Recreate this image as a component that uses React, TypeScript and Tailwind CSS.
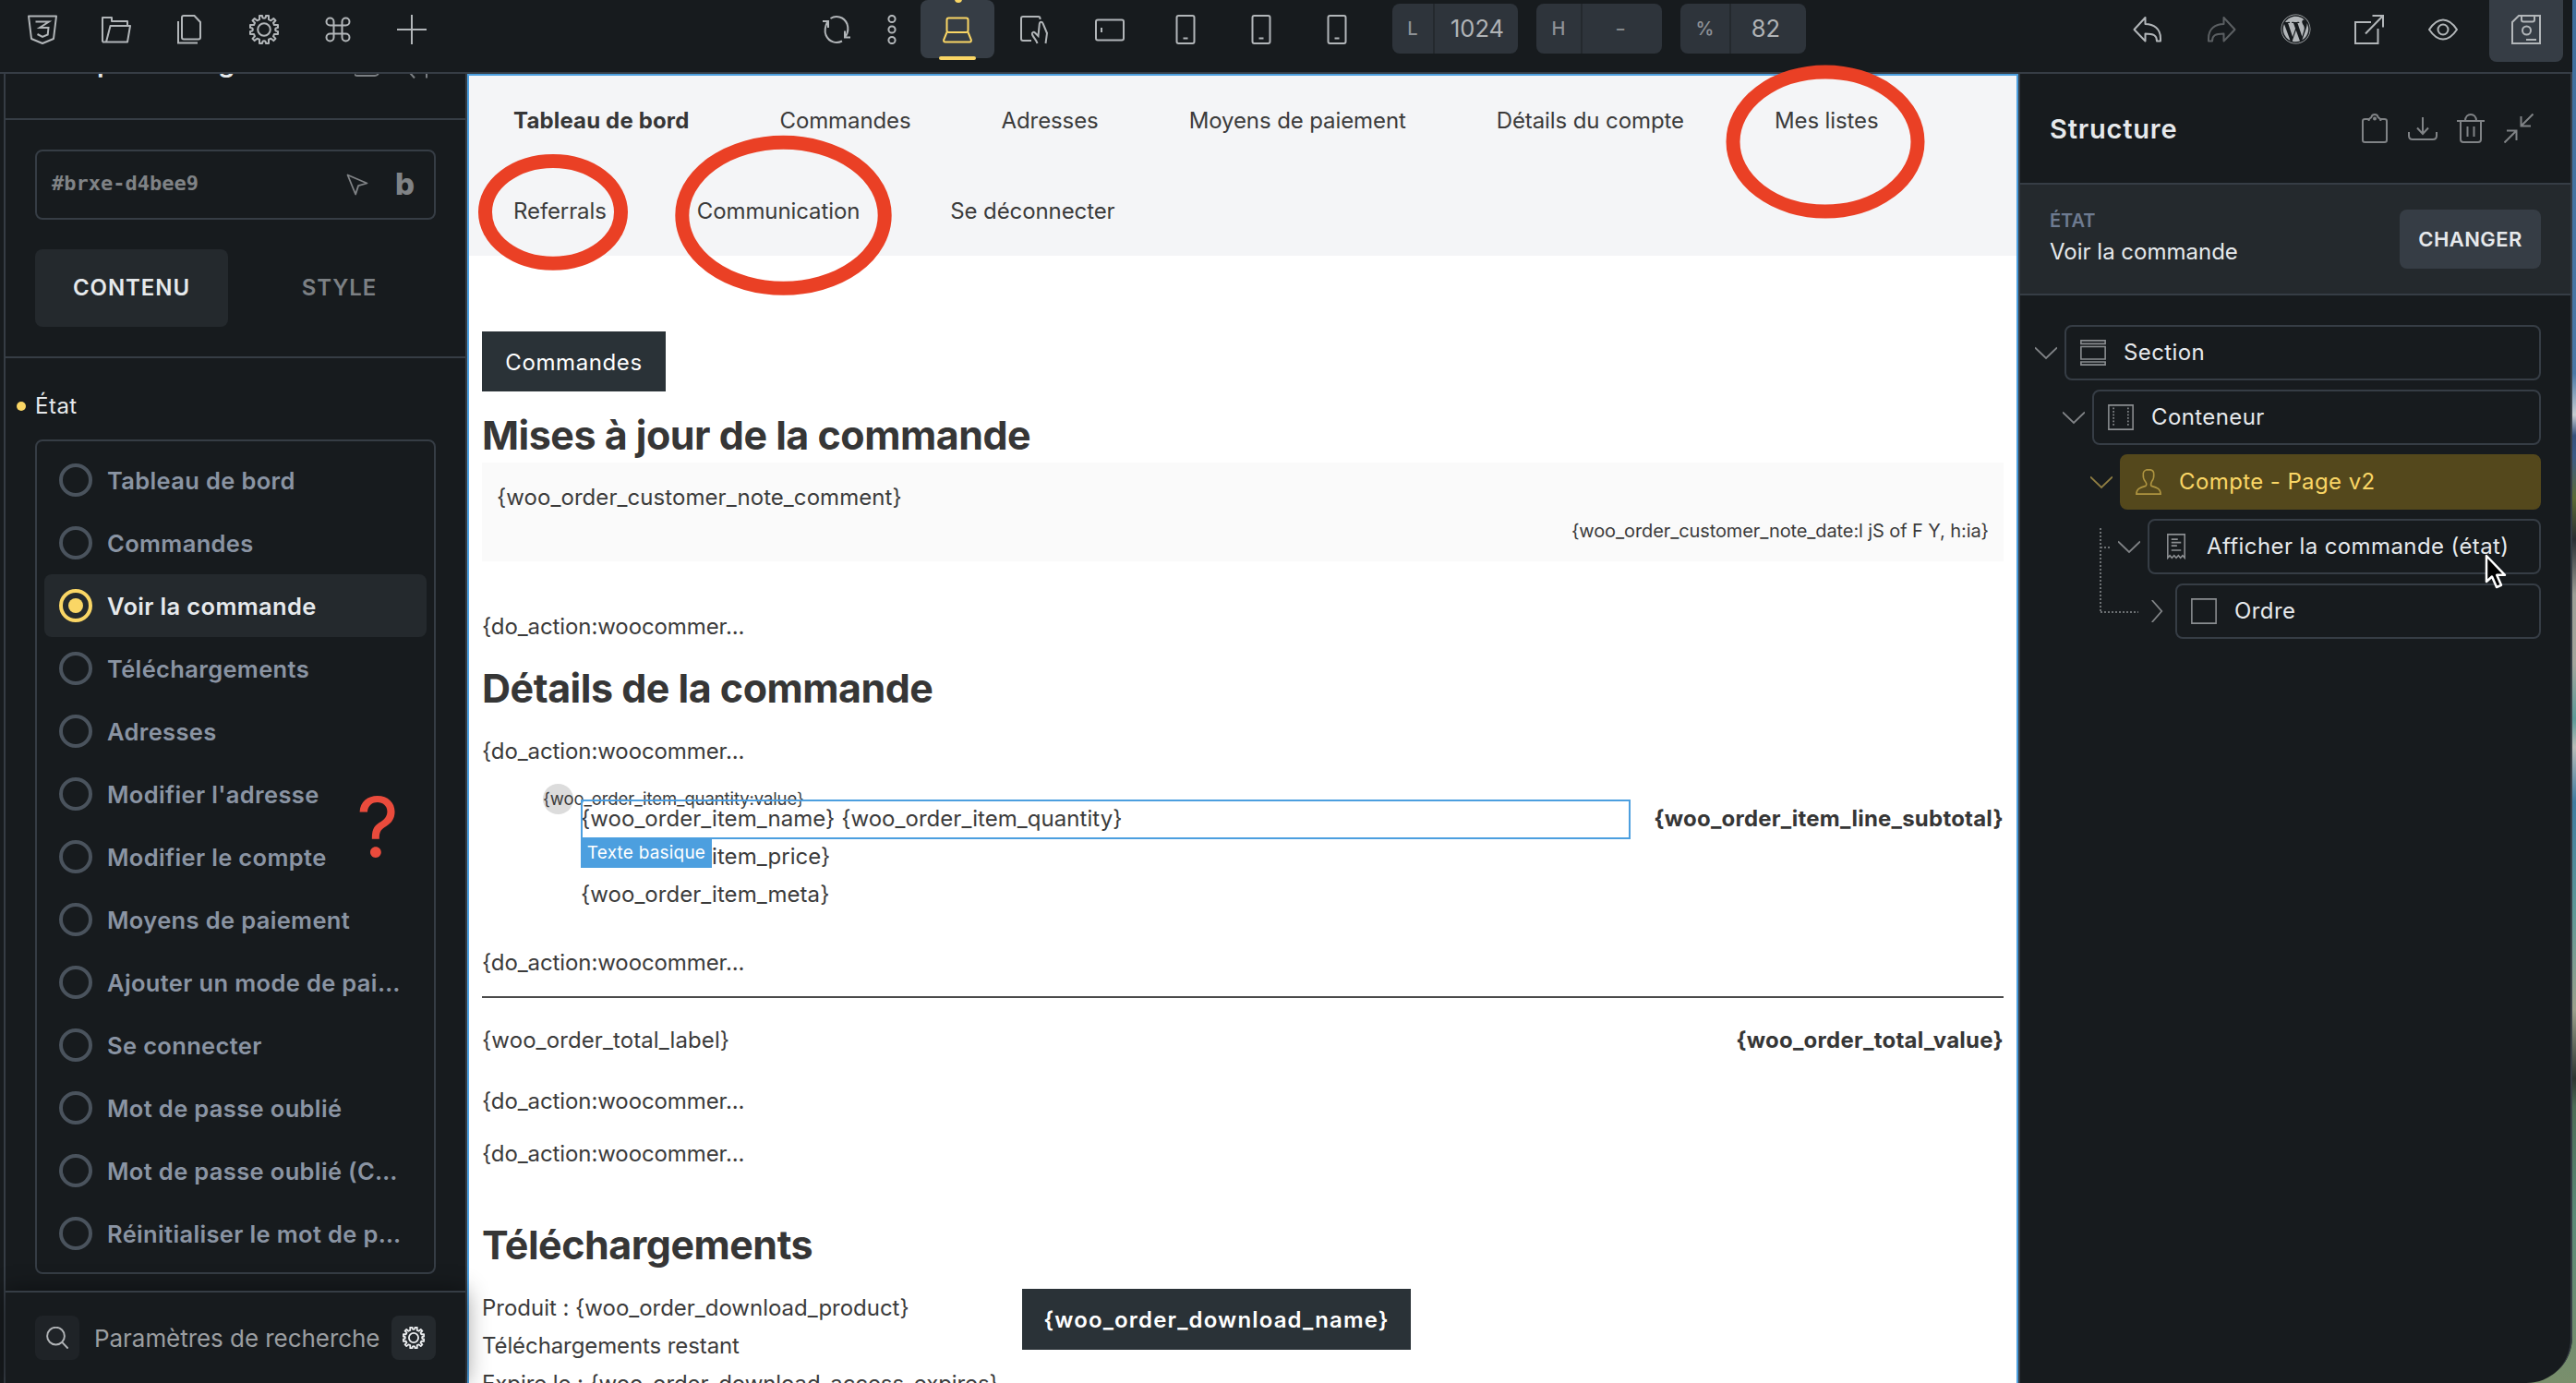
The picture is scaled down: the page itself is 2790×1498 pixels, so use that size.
import React from 'react';
import { FaWordpress } from 'react-icons/fa';

type IconProps = { children: React.ReactNode; size?: string; className?: string; sw?: number };

const Icon: React.FC<IconProps> = ({ children, size = 'w-8 h-8', className = '', sw = 2 }) => (
  <svg viewBox="0 0 32 32" fill="none" stroke="currentColor" strokeWidth={sw} className={`${size} shrink-0 ${className}`}>
    {children}
  </svg>
);

const GearShape = () => (
  <>
    <circle cx="16" cy="16" r="6.8" />
    <path
      strokeLinejoin="round"
      d="M11 1h3c0 3.800 4 3.800 4 0h3v4.200l2.500 1.100L26.300 4 28.500 6.200 26 8.800 27 11h4v3c-3.800 0-3.800 4 0 4v3h-4l-1 2.300 2.500 2.600-2.200 2.200-2.800-2.300L21 26.800V31h-3c0-3.800-4-3.800-4 0h-3v-4.200l-2.500-1L5.700 28.100 3.500 25.900 6 23.300 5 21H1v-3c3.800 0 3.800-4 0-4v-3h4l1-2.200L3.500 6.200 5.700 4l2.800 2.300L11 5.200z"
    />
  </>
);

const leftTools = [
  // CSS
  <Icon key="css">
    <path d="M1 1.500h30l-3 24.500-12 5-12-5z" strokeLinejoin="round" />
    <path d="M8.500 7.500h14.500l-10 6.500h9.500l-.8 7.500-5.700 2.500-5.500-3" />
  </Icon>,
  // Dossier
  <Icon key="folder">
    <path d="M1 29.500V3h10v4h17v5M1 29.500h27l3-17.500H9.500L5 29.500" strokeLinejoin="round" />
  </Icon>,
  // Pages
  <Icon key="pages">
    <path d="M9 1h11.500l6.500 7v16.500q0 2-2 2H9q-2 0-2-2V3q0-2 2-2z" />
    <path d="M3 7v23.500h21" />
  </Icon>,
  <Icon key="gear">
    <GearShape />
  </Icon>,
  // Commande
  <Icon key="cmd">
    <path d="M11.500 11.500h9v9h-9zM11.500 11.500V7.500a4 4 0 1 0-4 4zM20.500 11.500V7.500a4 4 0 1 1 4 4zM11.500 20.500v4a4 4 0 1 1-4-4zM20.500 20.500v4a4 4 0 1 0 4-4z" />
  </Icon>,
  <Icon key="plus">
    <path d="M16 0v32M0 16h32" />
  </Icon>,
];

const MobileIcon = () => (
  <Icon>
    <rect x="6.500" y="1" width="19" height="30" rx="2" />
    <path d="M13.500 25.500h5" />
  </Icon>
);

const TopBox: React.FC<{ label: string; value: string; labelWidth: string; valueClass?: string }> = ({ label, value, labelWidth, valueClass = '' }) => (
  <div className="flex w-[136px] h-[54px] rounded-lg bg-[#2e343b] overflow-hidden">
    <div className={`${labelWidth} flex items-center justify-center border-r-2 border-[#24292e] text-[20px] font-medium text-[#8e9297]`}>{label}</div>
    <div className={`flex-1 flex items-center justify-center text-[25.5px] ${valueClass || 'text-[#b0b3b6] pl-[2px]'}`}>{value}</div>
  </div>
);

const TopBar: React.FC = () => (
  <header className="flex h-20 shrink-0 border-b-2 border-[#363d45] text-[#b2b6b9]">
    <div className="flex pl-[6px]">
      {leftTools.map((icon, i) => (
        <div key={i} className="w-20 h-[63px] flex items-center justify-center">{icon}</div>
      ))}
    </div>
    <div className="flex ml-[390px]">
      <div className="w-[60px] h-[63px] flex items-center justify-center">
        <Icon>
          <path d="M9.500 4C15 .5 24 1.500 27.500 10c1.500 4 1 9-1.500 13.500M22 28.500C16 31.500 8 30 4.500 22c-1.500-4-1-9 1.500-14" />
          <path d="M1 7h6v7M31 24.500h-6v-7" />
        </Icon>
      </div>
      <div className="w-[60px] h-[63px] flex items-center justify-center">
        <Icon>
          <circle cx="16" cy="4.500" r="3.600" />
          <circle cx="16" cy="16" r="3.600" />
          <circle cx="16" cy="27.500" r="3.600" />
        </Icon>
      </div>
      <div className="relative ml-px mr-[3px] w-20 h-[63px] rounded-lg bg-[#363d45] text-[#fad665] flex items-center justify-center">
        <Icon>
          <rect x="4.500" y="3.500" width="23" height="15.500" rx="2" />
          <path d="M4.500 19 1.200 27q-.5 2.500 1.600 2.500h26.400q2.100 0 1.600-2.500L27.500 19" />
        </Icon>
        <span className="absolute left-[37px] top-[-5px] w-2 h-2 rounded-full bg-[#fad665]"></span>
        <span className="absolute left-5 top-[61px] w-10 h-1 rounded-sm bg-[#fad665]"></span>
      </div>
      <div className="flex gap-[2px]">
        <div className="w-20 h-[63px] flex items-center justify-center">
          <Icon>
            <path d="M22.500 5V4q0-2-2-2H4Q2 2 2 4v22q0 2 2 2h9" />
            <path d="M19.500 31c-.5-3-4-6-5.500-9.500-.8-2.500 1.500-3.500 3-2l3.500 3.500 1.300-13c.5-3 3.200-3 4 0L30 20 28.500 31" />
          </Icon>
        </div>
        <div className="w-20 h-[63px] flex items-center justify-center">
          <Icon>
            <rect x="1" y="5.500" width="30" height="22" rx="2" />
            <path d="M7 14v5" />
          </Icon>
        </div>
        <div className="w-20 h-[63px] flex items-center justify-center"><MobileIcon /></div>
        <div className="w-20 h-[63px] flex items-center justify-center"><MobileIcon /></div>
        <div className="w-20 h-[63px] flex items-center justify-center"><MobileIcon /></div>
      </div>
      <div className="flex gap-5 ml-5 mt-1">
        <TopBox label="L" value="1024" labelWidth="w-[46px]" />
        <TopBox label="H" value="-" labelWidth="w-[50px]" valueClass="text-[#85898c] pr-1" />
        <TopBox label="%" value="82" labelWidth="w-[55px]" valueClass="text-[#b0b3b6] pr-[6px]" />
      </div>
    </div>
    <div className="flex ml-auto mr-[10px]">
      <div className="w-20 h-[63px] flex items-center justify-center">
        <Icon>
          <path d="M13.500 3v7c9 0 16.500 5 16.500 15.500v3h-4c0-6-3-8-12.500-8v8L1.500 16z" strokeLinejoin="round" />
        </Icon>
      </div>
      <div className="w-20 h-[63px] flex items-center justify-center text-[#5b5f62]">
        <Icon>
          <path d="M18.500 3v7C9.500 10 2 15 2 25.500v3h4c0-6 3-8 12.500-8v8L30.500 16z" strokeLinejoin="round" />
        </Icon>
      </div>
      <div className="w-20 h-[63px] flex items-center justify-center"><FaWordpress className="w-[33px] h-[33px]" /></div>
      <div className="w-20 h-[63px] flex items-center justify-center">
        <Icon>
          <path d="M18 8H1v23h24.500V15M12 20.500 31 1M19.500 1H31v12.500" />
        </Icon>
      </div>
      <div className="w-20 h-[63px] flex items-center justify-center">
        <Icon>
          <path d="M1 16C6 8.500 10.500 5.500 16 5.500S26 8.500 31 16c-5 7.500-9.500 10.500-15 10.500S6 23.500 1 16z" strokeLinejoin="round" />
          <circle cx="16" cy="16" r="5.500" />
        </Icon>
      </div>
      <div className="ml-[10px] w-20 h-[67px] rounded-b-lg bg-[#363d45] flex items-center justify-center pb-1">
        <Icon>
          <path d="M8 1h23v30H1V8z" />
          <path d="M11 1v4.500q0 2 2 2h10q2 0 2-2V1" />
          <circle cx="16.500" cy="17" r="4.500" />
          <path d="M16 27h11" />
        </Icon>
      </div>
    </div>
  </header>
);

const states = [
  'Tableau de bord',
  'Commandes',
  'Voir la commande',
  'Téléchargements',
  'Adresses',
  "Modifier l'adresse",
  'Modifier le compte',
  'Moyens de paiement',
  'Ajouter un mode de pai…',
  'Se connecter',
  'Mot de passe oublié',
  'Mot de passe oublié (C…',
  'Réinitialiser le mot de p…',
];

const StateOption: React.FC<{ label: string; active: boolean }> = ({ label, active }) => (
  <li className={`flex items-center h-[68px] pl-4 rounded-lg ${active ? 'bg-[#24292d]' : ''}`}>
    <span className={`w-9 h-9 rounded-full border-4 flex items-center justify-center ${active ? 'border-[#fad665]' : 'border-[#4a535d]'}`}>
      {active && <span className="w-4 h-4 rounded-full bg-[#fad665]"></span>}
    </span>
    <span className={`ml-4 pt-[2px] text-[25.5px] font-semibold tracking-[0.35px] whitespace-nowrap ${active ? 'text-[#e6e9ec]' : 'text-[#8a94a3]'}`}>{label}</span>
  </li>
);

const LeftPanel: React.FC = () => (
  <aside className="relative ml-1 w-[502px] shrink-0 flex flex-col border-x-2 border-[#363d45]">
    {/* En-tête du panneau, défilé sous la barre d'outils */}
    <div className="h-[50px] shrink-0 border-b-2 border-[#363d45] overflow-hidden flex items-start pl-8">
      <div className="-mt-[31px] h-[38px] flex items-center w-[434px]">
        <span className="text-[29px] font-semibold tracking-[0.6px] [word-spacing:9px] text-[#e6e9ec] whitespace-nowrap">Compte - Page v2</span>
        <span className="ml-auto -mr-1 flex gap-7 text-[#7c8084]">
          <Icon><rect x="-1" y="6" width="27" height="24" rx="4" /></Icon>
          <Icon className="overflow-visible"><path d="M5 32.500 0 27M18 32.500V10" /></Icon>
        </span>
      </div>
    </div>
    <div className="h-[258px] shrink-0 border-b-2 border-[#363d45] px-8 pt-8">
      <div className="h-[76px] rounded-lg border-2 border-[#363d45] flex items-center pl-4 text-[#808386]">
        <span className="text-[22px] font-bold font-['DejaVu_Sans_Mono',monospace] pb-1">#brxe-d4bee9</span>
        <Icon size="w-6 h-6" className="ml-auto" sw={2.4}>
          <path d="M2 2 30 14 17.500 17.500 13.500 30z" strokeLinejoin="round" />
        </Icon>
        <span className="ml-[29px] mr-[21px] w-[21px] text-[33px] leading-none font-extrabold pb-[2px]">b</span>
      </div>
      <div className="flex gap-4 mt-8 text-2xl font-semibold tracking-[0.9px]">
        <div className="flex-1 h-[84px] rounded-lg bg-[#24292d] text-[#e6e9ec] flex items-center justify-center">CONTENU</div>
        <div className="flex-1 h-[84px] text-[#7c8084] flex items-center justify-center">STYLE</div>
      </div>
    </div>
    <div className="flex-1 px-8">
      <div className="flex items-center h-9 mt-[34px] -ml-5">
        <span className="w-[10px] h-[10px] rounded-full bg-[#fad665]"></span>
        <span className="ml-[10px] text-2xl text-[#e6e9ec] tracking-[0.5px]">État</span>
      </div>
      <ul className="mt-[18px] border-2 border-[#363d45] rounded-lg p-2">
        {states.map((label) => (
          <StateOption key={label} label={label} active={label === 'Voir la commande'} />
        ))}
      </ul>
    </div>
    <div className="h-[100px] shrink-0 border-t-2 border-[#363d45] flex items-center px-8 shadow-[0_0_24px_rgba(0,0,0,0.45)]">
      <span className="w-12 h-12 rounded-lg bg-[#1f2327] text-[#b0b3b6] flex items-center justify-center">
        <Icon size="w-6 h-6" sw={2.6}>
          <circle cx="14" cy="13.500" r="12.500" />
          <path d="M23 22.500 31.500 31.500" />
        </Icon>
      </span>
      <span className="ml-4 text-[26px] tracking-[-0.05px] text-[#9b9ea1] whitespace-nowrap">Paramètres de recherche</span>
      <span className="ml-auto w-12 h-12 rounded-lg bg-[#24292d] text-[#eceef0] flex items-center justify-center">
        <Icon size="w-6 h-6" sw={2.4}><GearShape /></Icon>
      </span>
    </div>
    {/* Annotation */}
    <span className="absolute left-[380px] top-[768px] text-[90px] leading-[96px] text-[#ea4b3c]">?</span>
  </aside>
);

const navRows = [
  ['Tableau de bord', 'Commandes', 'Adresses', 'Moyens de paiement', 'Détails du compte', 'Mes listes'],
  ['Referrals', 'Communication', 'Se déconnecter'],
];

const Heading: React.FC<{ className: string; children: React.ReactNode }> = ({ className, children }) => (
  <h2 className={`text-[43px] leading-[54px] font-bold tracking-[-0.5px] text-[#363636] ${className}`}>{children}</h2>
);

const Action: React.FC<{ className: string }> = ({ className }) => <p className={className}>{'{do_action:woocommer...'}</p>;

const Canvas: React.FC = () => (
  <main className="w-[1680px] shrink-0 bg-white border-2 border-b-0 border-[#4c9fdf] text-[24px] leading-[41px] tracking-[-0.1px] text-[#3b3b3b] whitespace-nowrap overflow-hidden">
    <nav className="h-[195px] bg-[#f4f5f7] pl-12 pt-7 flex flex-col gap-[57px]">
      {navRows.map((row, i) => (
        <div key={i} className="flex gap-[98px]">
          {row.map((label) => (
            <span key={label} className={label === 'Tableau de bord' ? 'font-bold tracking-[0.15px] text-[#363636]' : ''}>{label}</span>
          ))}
        </div>
      ))}
    </nav>
    <div className="px-[14px]">
      <div className="mt-[82px] w-[199px] h-[65px] bg-[#2a3237] text-white tracking-[0.6px] flex items-center justify-center pt-px">Commandes</div>
      <Heading className="mt-5">Mises à jour de la commande</Heading>
      <div className="mt-[3px] h-[107px] bg-[#fafafa] px-4 pt-[17px]">
        <p className="tracking-[0.06px]">{'{woo_order_customer_note_comment}'}</p>
        <p className="text-right text-[20px] leading-[33px]">{'{woo_order_customer_note_date:l jS of F Y, h:ia}'}</p>
      </div>
      <Action className="mt-[50px]" />
      <Heading className="mt-[19px]">Détails de la commande</Heading>
      <Action className="mt-[21px]" />

      {/* Ligne d'article */}
      <div className="mt-8 flex">
        <div className="relative w-[107px]">
          <span className="absolute left-[66px] -top-[17px] w-[33px] h-[33px] rounded-full bg-[#dcdcdc]"></span>
          <span className="absolute left-[66px] -top-4 text-[18.5px] leading-[30px]">{'{woo_order_item_quantity:value}'}</span>
        </div>
        <div className="relative w-[1137px] tracking-[0.04px]">
          <p>{'{woo_order_item_name} {woo_order_item_quantity}'}</p>
          <p>{'{woo_order_item_price}'}</p>
          <p>{'{woo_order_item_meta}'}</p>
          <div className="absolute inset-x-0 top-0 h-[43px] border-2 border-[#4c9fdf]"></div>
          <span className="absolute left-0 top-[41px] w-[142px] h-[33px] bg-[#4c9fdf] text-white text-[19px] leading-[33px] tracking-[0.2px] text-center">Texte basique</span>
        </div>
        <p className="ml-auto font-bold tracking-[0.22px] text-[#363636]">{'{woo_order_item_line_subtotal}'}</p>
      </div>

      <Action className="mt-[33px]" />
      <hr className="mt-4 border-0 h-[2px] bg-[#4a4a4a]" />
      <div className="mt-[25px] flex justify-between">
        <p className="tracking-[0.1px]">{'{woo_order_total_label}'}</p>
        <p className="font-bold tracking-[0.25px] text-[#363636]">{'{woo_order_total_value}'}</p>
      </div>
      <Action className="mt-[25px]" />
      <Action className="mt-4" />
      <Heading className="mt-[51px]">Téléchargements</Heading>
      <div className="mt-[21px] flex">
        <div className="w-[585px]">
          <p className="tracking-[-0.02px]">{'Produit : {woo_order_download_product}'}</p>
          <p>Téléchargements restant</p>
          <p>{'Expire le : {woo_order_download_access_expires}'}</p>
        </div>
        <div className="w-[421px] h-[66px] bg-[#2a3237] text-white font-semibold tracking-[1.15px] flex items-center justify-center">{'{woo_order_download_name}'}</div>
      </div>
    </div>
  </main>
);

const ChevronDown = () => <Icon size="w-6 h-6" sw={2.4}><path d="M0 8.500 16 24 32 8.500" /></Icon>;
const ChevronRight = () => <Icon size="w-6 h-6" sw={2.4}><path d="M9 0 23 16 9 32" /></Icon>;

const tree = [
  {
    label: 'Section',
    pad: 'pl-4',
    icon: <path d="M1 1h30v4H1zM1 8.500h30v15.500H1zM1 27.500h30v3.500H1z" />,
  },
  {
    label: 'Conteneur',
    pad: 'pl-[46px]',
    icon: (
      <>
        <path d="M1 1h30v30H1z" />
        <path d="M7 4v24M25 4v24" strokeDasharray="2 2" />
      </>
    ),
  },
  {
    label: 'Compte - Page v2',
    pad: 'pl-[76px]',
    icon: (
      <path d="M13.500 1h5q4.500 1 4 6 .5 5-2.500 8.500-2 4-.5 5.500C27 23 31 25 31 31H1c0-6 4-8 11.500-10 1.500-1.500 1.500-3-.5-5.500Q9 12 9.500 7q-.5-4.500 4-6z" />
    ),
    selected: true,
  },
  {
    label: 'Afficher la commande (état)',
    pad: 'pl-[106px]',
    icon: (
      <>
        <path d="M5.500 30V1h21v29l-2.600-3-2.600 3-2.600-3-2.700 3-2.600-3-2.700 3-2.600-3z" />
        <path d="M10 7h8M10 11h12M10 15h7M10 20.500h12" />
      </>
    ),
  },
  { label: 'Ordre', pad: 'pl-[136px]', icon: <path d="M1 1h30v30H1z" />, closed: true },
];

const StructurePanel: React.FC = () => (
  <aside className="relative flex-1 border-x-2 border-[#363d45] rounded-br-[48px]">
    <div className="h-[120px] border-b-2 border-[#363d45] pl-8 pr-10 flex items-center">
      <h1 className="text-[29px] font-semibold tracking-[0.8px] text-[#e6e9ec] pt-px">Structure</h1>
      <div className="ml-auto flex gap-5 text-[#808386]">
        <Icon>
          <path d="M10 6H5.500Q3 6 3 8v21q0 2 2.500 2h21q2.500 0 2.500-2V8q0-2-2.500-2H22M9.500 8c0-3.500 2.500-2.500 3-4.500C13.500.300 18.500.300 19.500 3.500c.5 2 3 1 3 4.500" />
          <circle cx="16" cy="5.500" r="1" />
        </Icon>
        <Icon><path d="M16 4v18M10 15.500 16 22l6-6.500M1 20v4q0 4 4 4h22q4 0 4-4v-4" /></Icon>
        <Icon>
          <path d="M1 8h30M5 8v20q0 3 3 3h16q3 0 3-3V8M10 8C10 3 13 1 16 1s6 2 6 7M12.500 14v11M19.500 14v11" />
        </Icon>
        <Icon><path d="M31.500.5 18.500 13.500M18.500 3v10.500H29M.500 31.500l13-13M3 18.500h10.500V29" /></Icon>
      </div>
    </div>
    <div className="h-[120px] border-b-2 border-[#363d45] bg-[#24292d] pl-8 pr-8 flex items-center">
      <div className="pb-[6px]">
        <p className="text-[20px] leading-[34px] font-semibold text-[#6e7b91] -mb-px">ÉTAT</p>
        <p className="text-[24px] leading-[36px] text-[#e6e9ec]">Voir la commande</p>
      </div>
      <div className="ml-auto w-[153px] h-16 rounded-lg bg-[#363d45] text-[#e6e9ec] text-[22px] font-semibold tracking-[0.4px] flex items-center justify-center">CHANGER</div>
    </div>
    <div className="pt-8 pr-8 flex flex-col gap-[10px]">
      {tree.map((node) => (
        <div key={node.label} className={`${node.pad} flex items-center gap-2`}>
          <span className={node.selected ? 'text-[#8f7d42]' : 'text-[#808386]'}>{node.closed ? <ChevronRight /> : <ChevronDown />}</span>
          <div
            className={`flex-1 h-[60px] rounded-lg border-2 flex items-center pl-[15px] ${
              node.selected ? 'border-[#54481c] bg-[#54481c] text-[#fad665]' : 'border-[#363d45] text-[#e6e9ec]'
            }`}
          >
            <Icon size="w-7 h-7" sw={1.8} className={node.selected ? 'text-[#ae9440]' : 'text-[#8b8e91]'}>{node.icon}</Icon>
            <span className="ml-[19px] text-[24px] tracking-[0.4px] whitespace-nowrap">{node.label}</span>
          </div>
        </div>
      ))}
    </div>
    {/* Lignes pointillées de l'arborescence */}
    <svg className="absolute left-[86px] top-[492px] text-[#6c7073]" width="44" height="94" fill="none" stroke="currentColor" strokeWidth="2" strokeDasharray="2 2">
      <path d="M1 0v92M1 21h10M1 91h41" />
    </svg>
    {/* Pointeur */}
    <svg className="absolute left-[503px] top-[520px]" width="26" height="38" viewBox="0 0 26 38" fill="#000" stroke="#fff" strokeWidth="2.500" strokeLinejoin="round">
      <path d="M2 2v28l6-5.500 5 11.500 5-2.200-4.800-11H22z" />
    </svg>
  </aside>
);

const App: React.FC = () => (
  <div className="relative w-[2790px] h-[1498px] overflow-hidden bg-[linear-gradient(180deg,#3f6e9c_0%,#4a78a6_27%,#c5ccd0_30%,#35507c_31.500%,#3b5a86_33%,#5c6a35_36%,#2a2d33_39%,#9b9e96_43%,#a3a59c_48%,#5c9a98_52%,#b7bcb8_54%,#3f7ca0_58%,#5f9896_66%,#9aa08c_73%,#2d3430_78%,#4c6b55_80%,#5b8a78_88%,#7a8f6c_100%)] font-['Inter',sans-serif]">
    <div className="w-[2786px] h-[1498px] bg-[#171b1e] rounded-br-[50px] overflow-hidden flex flex-col">
      <TopBar />
      <div className="flex flex-1 min-h-0">
        <LeftPanel />
        <Canvas />
        <StructurePanel />
      </div>
    </div>
    {/* Cercles d'annotation */}
    <svg className="absolute left-0 top-0 pointer-events-none" width="2790" height="400" fill="none" stroke="#ea4025" strokeWidth="15">
      <ellipse cx="599" cy="229.800" rx="73.500" ry="55.400" />
      <ellipse cx="848.500" cy="233.300" rx="109.700" ry="79" />
      <ellipse cx="1977" cy="153.500" rx="100" ry="75.500" />
    </svg>
  </div>
);

export default App;
